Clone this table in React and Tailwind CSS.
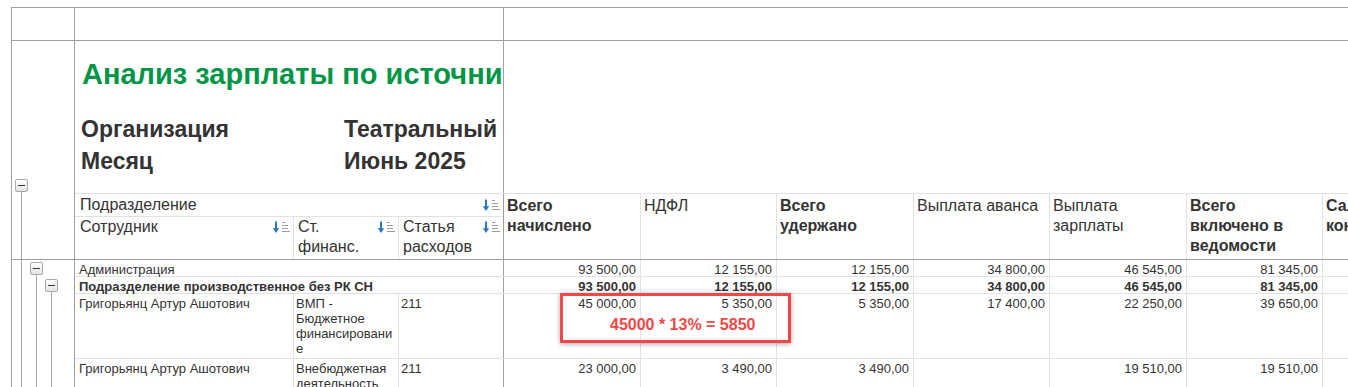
import React from "react";

function SortIcon() {
  return (
    <svg width="18" height="13" viewBox="0 0 18 13" className="shrink-0 mt-[4px]">
      <path d="M3 0.5 V8.5" stroke="#2b78bd" strokeWidth="2" />
      <path d="M-0.2 7.2 L3 12 L6.2 7.2 Z" fill="#2b78bd" />
      <path d="M9 1.5 H12 M9 4.5 H15 M9 7.5 H15 M9 10.5 H17" stroke="#9c9c9c" strokeWidth="1" />
    </svg>
  );
}

function TreeBox() {
  return (
    <div className="w-[13px] h-[13px] shrink-0 border border-[#a8a8a8] rounded-[2px] bg-linear-to-b from-white to-[#e4e4e4] flex items-center justify-center">
      <div className="w-[7px] h-px bg-[#3a3a3a]" />
    </div>
  );
}

const cols = [
  { w: "w-[137px]", title: ["Всего", "начислено"], bold: true },
  { w: "w-[136px]", title: ["НДФЛ"], bold: false },
  { w: "w-[137px]", title: ["Всего", "удержано"], bold: true },
  { w: "w-[136px]", title: ["Выплата аванса"], bold: false },
  { w: "w-[137px]", title: ["Выплата", "зарплаты"], bold: false },
  { w: "w-[136px]", title: ["Всего", "включено в", "ведомости"], bold: true },
  { w: "w-[137px]", title: ["Сальдо", "конечное"], bold: true },
];

const rows = [
  {
    h: "h-[17px]",
    merged: true,
    name: "Администрация",
    bold: false,
    vals: ["93 500,00", "12 155,00", "12 155,00", "34 800,00", "46 545,00", "81 345,00", ""],
  },
  {
    h: "h-[17px]",
    merged: true,
    name: "Подразделение производственное без РК СН",
    bold: true,
    vals: ["93 500,00", "12 155,00", "12 155,00", "34 800,00", "46 545,00", "81 345,00", ""],
  },
  {
    h: "h-[65px]",
    merged: false,
    emp: "Григорьянц Артур Ашотович",
    fin: ["ВМП -", "Бюджетное", "финансировани", "е"],
    art: "211",
    bold: false,
    vals: ["45 000,00", "5 350,00", "5 350,00", "17 400,00", "22 250,00", "39 650,00", ""],
  },
  {
    h: "h-[40px]",
    merged: false,
    emp: "Григорьянц Артур Ашотович",
    fin: ["Внебюджетная", "деятельность"],
    art: "211",
    bold: false,
    vals: ["23 000,00", "3 490,00", "3 490,00", "", "19 510,00", "19 510,00", ""],
  },
];

export default function App() {
  return (
    <div className="relative w-[1348px] h-[387px] overflow-hidden bg-white pt-[7px] pl-[11px] font-['Liberation_Sans',Arial,sans-serif] text-[#333]">
      <div className="w-[1500px] border-t border-l border-[#a0a0a0]">
        {/* top empty row */}
        <div className="flex h-[33px] border-b border-[#a0a0a0]">
          <div className="w-[63px] shrink-0 border-r border-[#a0a0a0]" />
          <div className="w-[429px] shrink-0 border-r border-[#a0a0a0]" />
          <div className="flex-1" />
        </div>

        {/* title + header section */}
        <div className="flex border-b border-[#a0a0a0]">
          <div className="w-[63px] shrink-0 border-r border-[#a0a0a0] flex flex-col pl-[3px] pt-[138px]">
            <TreeBox />
            <div className="ml-[6px] w-px flex-1 bg-[#a8a8a8]" />
          </div>
          <div className="flex-1 flex flex-col">
            <div className="flex h-[153px] border-b border-[#e2e2e2]">
              <div className="w-[429px] shrink-0 border-r border-[#a0a0a0] overflow-hidden pl-[6px] pt-[17px]">
                <div className="ml-[1px] whitespace-nowrap text-[29px] leading-[32px] font-bold text-[#009646]">
                  Анализ зарплаты по источникам финансирования
                </div>
                <div className="mt-[23px] text-[23px] leading-[32px] font-bold text-[#333]">
                  <div className="flex whitespace-nowrap">
                    <div className="w-[263px] shrink-0">Организация</div>
                    <div>Театральный</div>
                  </div>
                  <div className="flex whitespace-nowrap">
                    <div className="w-[263px] shrink-0">Месяц</div>
                    <div>Июнь 2025</div>
                  </div>
                </div>
              </div>
              <div className="flex-1" />
            </div>
            <div className="flex h-[65px] text-[16px] leading-[20px]">
              <div className="w-[429px] shrink-0 border-r border-[#a0a0a0] flex flex-col">
                <div className="h-[23px] border-b border-[#e2e2e2] flex items-start justify-between pl-[5px] pr-[2px] pt-px">
                  <span>Подразделение</span>
                  <SortIcon />
                </div>
                <div className="flex flex-1">
                  <div className="w-[219px] shrink-0 border-r border-[#e2e2e2] flex items-start justify-between pl-[5px] pr-[2px]">
                    <span>Сотрудник</span>
                    <SortIcon />
                  </div>
                  <div className="w-[105px] shrink-0 border-r border-[#e2e2e2] flex items-start justify-between pl-[4px] pr-[2px]">
                    <span>
                      Ст.
                      <br />
                      финанс.
                    </span>
                    <SortIcon />
                  </div>
                  <div className="w-[104px] shrink-0 flex items-start justify-between pl-[4px] pr-[2px]">
                    <span>
                      Статья
                      <br />
                      расходов
                    </span>
                    <SortIcon />
                  </div>
                </div>
              </div>
              {cols.map((c, i) => (
                <div
                  key={i}
                  className={`${c.w} shrink-0 border-r border-[#e2e2e2] pl-[3px] pt-[2px] whitespace-nowrap ${c.bold ? "font-bold" : ""}`}
                >
                  {c.title.map((t, ti) => (
                    <div key={ti}>{t}</div>
                  ))}
                </div>
              ))}
            </div>
          </div>
        </div>

        {/* data section */}
        <div className="flex h-[140px]">
          <div className="w-[63px] shrink-0 border-r border-[#a0a0a0] flex">
            <div className="ml-[9px] w-px bg-[#a8a8a8]" />
            <div className="ml-[8px] flex flex-col pt-[2px]">
              <TreeBox />
              <div className="ml-[6px] w-px flex-1 bg-[#a8a8a8]" />
            </div>
            <div className="ml-[2px] flex flex-col pt-[19px]">
              <TreeBox />
              <div className="ml-[6px] w-px flex-1 bg-[#a8a8a8]" />
            </div>
          </div>
          <div className="flex-1 flex flex-col text-[13px] leading-[15px]">
            {rows.map((r, ri) => (
              <div key={ri} className={`flex shrink-0 ${r.h} border-b border-[#e2e2e2] ${r.bold ? "font-bold" : ""}`}>
                {r.merged ? (
                  <div className="w-[429px] shrink-0 border-r border-[#a0a0a0] pl-[4px] pt-[2px] whitespace-nowrap">
                    {r.name}
                  </div>
                ) : (
                  <div className="w-[429px] shrink-0 border-r border-[#a0a0a0] flex">
                    <div className="w-[219px] shrink-0 border-r border-[#e2e2e2] pl-[4px] pt-[2px] whitespace-nowrap">
                      {r.emp}
                    </div>
                    <div className="w-[105px] shrink-0 border-r border-[#e2e2e2] pl-[2px] pt-[2px] whitespace-nowrap">
                      {r.fin.map((l, li) => (
                        <div key={li}>{l}</div>
                      ))}
                    </div>
                    <div className="w-[104px] shrink-0 pl-[2px] pt-[2px]">{r.art}</div>
                  </div>
                )}
                {cols.map((c, ci) => (
                  <div
                    key={ci}
                    className={`${c.w} shrink-0 border-r border-[#e2e2e2] text-right pr-[4px] pt-[2px] whitespace-nowrap`}
                  >
                    {r.vals[ci]}
                  </div>
                ))}
              </div>
            ))}
          </div>
        </div>
      </div>

      {/* annotation */}
      <div className="absolute left-[560px] top-[293px] w-[231px] h-[50px] border-[3px] border-[#f04848] shadow-[0_1px_5px_rgba(0,0,0,0.35)] pl-[47px] pt-[19px]">
        <div className="whitespace-nowrap text-[16px] leading-[20px] font-bold text-[#f04848]">
          45000 * 13% = 5850
        </div>
      </div>
    </div>
  );
}
